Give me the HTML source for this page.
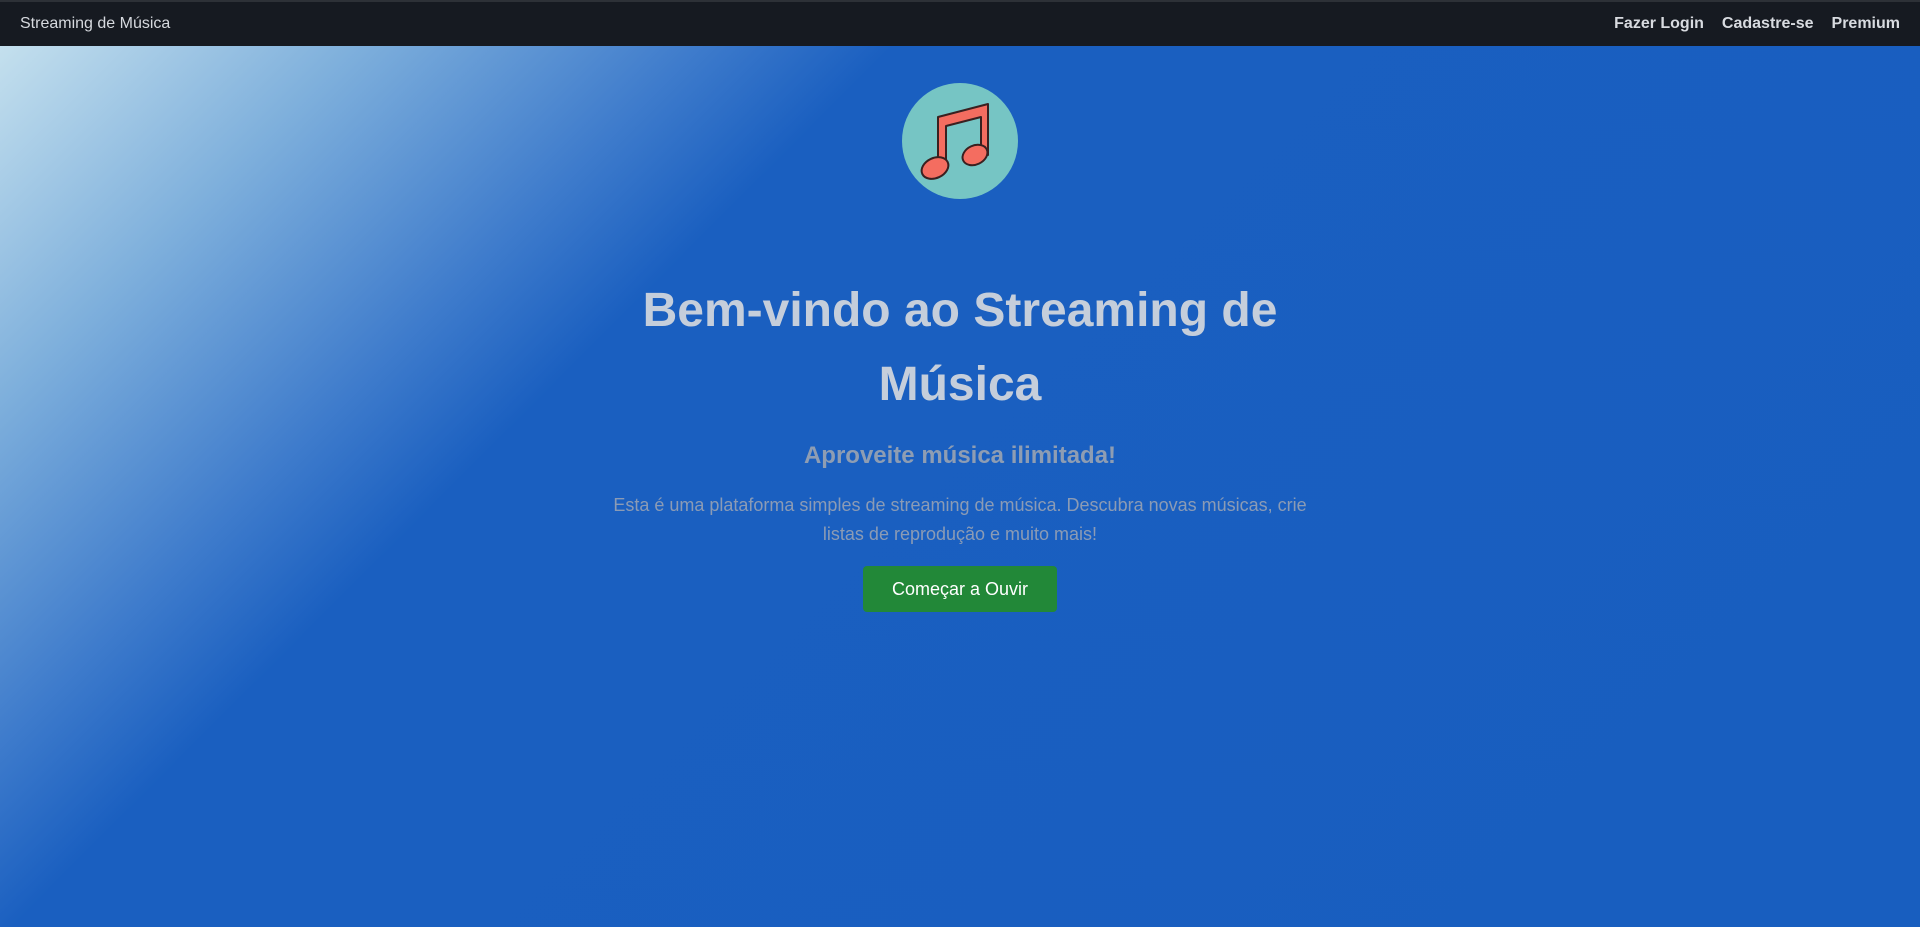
<!DOCTYPE html>
<html><head><meta charset="utf-8"><style>
*{margin:0;padding:0;box-sizing:border-box}
body{width:1920px;height:927px;overflow:hidden;font-family:"Liberation Sans",sans-serif;background:linear-gradient(135deg,#cde6f0 0%,#7fb0dc 14%,#3f7ccc 26%,#1a5fc0 33%,#185ebf 100%)}
nav{height:46px;background:#161a21;border-top:2px solid #2d3137;display:flex;align-items:center;justify-content:space-between;padding:0 20px}
.brand{color:#d6d9de;font-size:16px}
.links a{color:#d8dbe0;font-weight:bold;font-size:16px;margin-left:18px;text-decoration:none}
.circle{position:absolute;left:902px;top:83px;width:116px;height:116px;border-radius:50%;background:#76c5c4}
h1{position:absolute;top:274px;left:0;width:1920px;text-align:center;color:#c5cedb;font-size:48px;line-height:74px;font-weight:bold}
h3{position:absolute;top:442px;width:1920px;text-align:center;color:#8e9db3;font-size:24px;font-weight:bold}
p{position:absolute;top:491px;left:595px;width:730px;text-align:center;color:#8b9bb5;font-size:18px;line-height:29px}
.btn{position:absolute;left:863px;top:566px;width:194px;height:46px;background:#228838;border-radius:4px;color:#fff;font-size:18px;display:flex;align-items:center;justify-content:center}
</style></head><body>
<nav><div class="brand">Streaming de Música</div><div class="links"><a>Fazer Login</a><a>Cadastre-se</a><a>Premium</a></div></nav>
<div class="circle"><svg width="116" height="116" viewBox="0 0 116 116">
<g fill="#f46d60" stroke="#3a2020" stroke-width="2" stroke-linejoin="round">
<path d="M36 34 L86 21 L86 72 L79 72 L79 34 L44 43 L44 86 L36 86 Z"/>
<ellipse cx="33" cy="85" rx="14" ry="10" transform="rotate(-25 33 85)"/>
<ellipse cx="73" cy="72" rx="13" ry="9.5" transform="rotate(-25 73 72)"/>
</g></svg></div>
<h1>Bem-vindo ao Streaming de<br>Música</h1>
<h3>Aproveite música ilimitada!</h3>
<p>Esta é uma plataforma simples de streaming de música. Descubra novas músicas, crie<br>listas de reprodução e muito mais!</p>
<div class="btn">Começar a Ouvir</div>
</body></html>
